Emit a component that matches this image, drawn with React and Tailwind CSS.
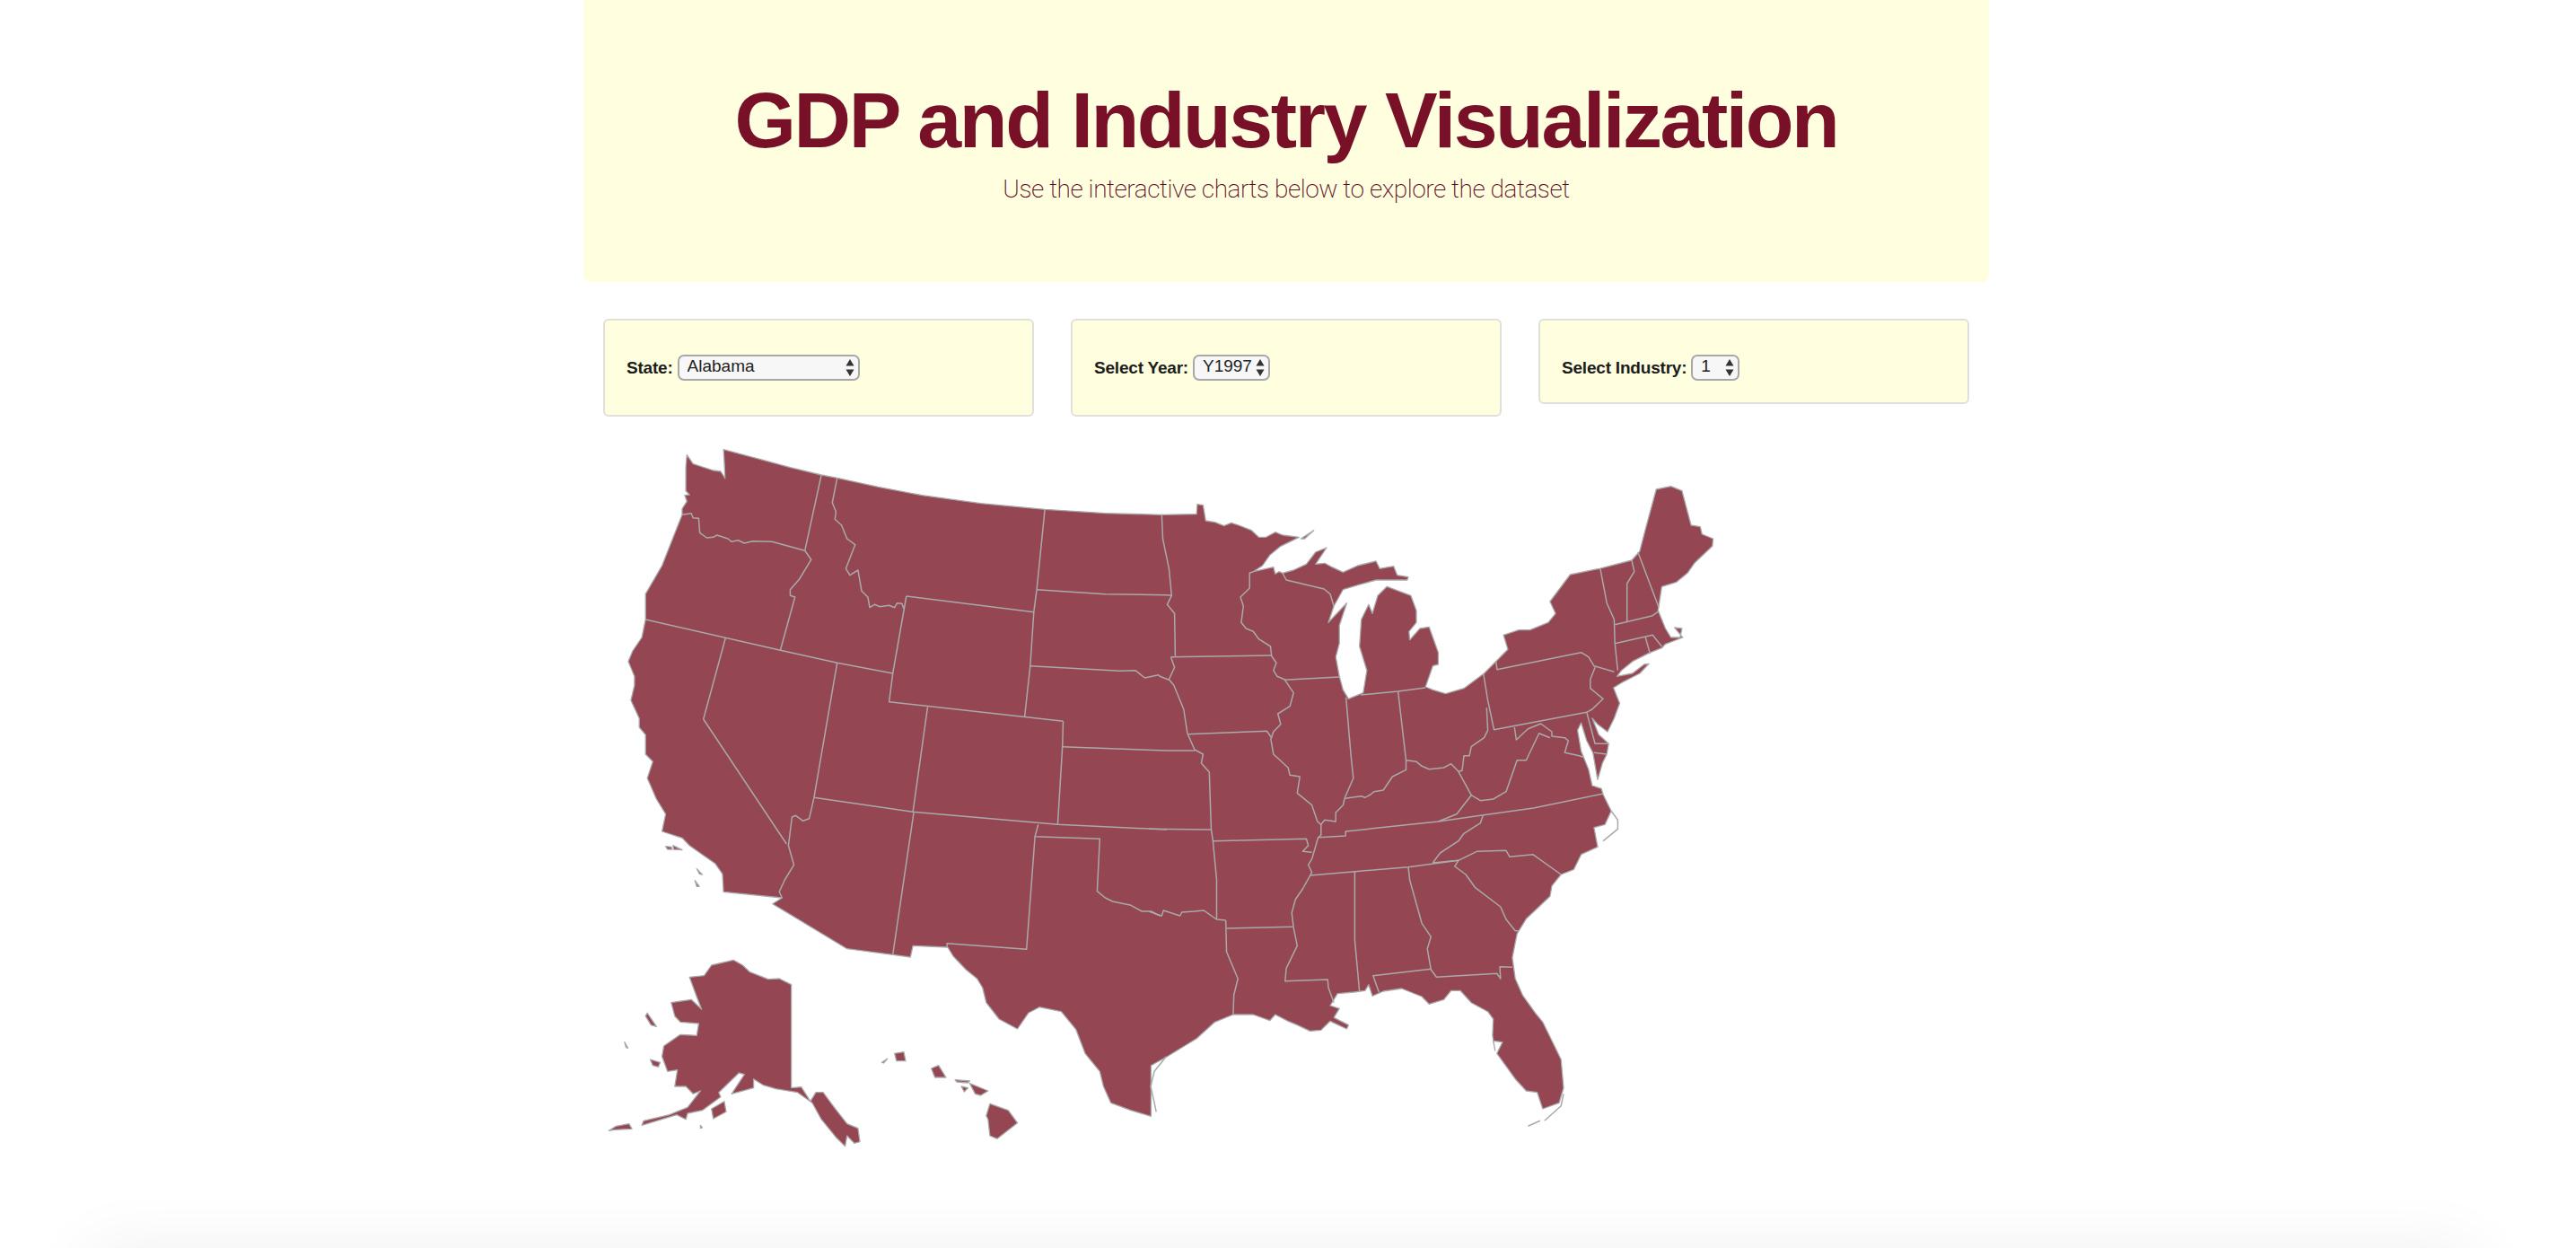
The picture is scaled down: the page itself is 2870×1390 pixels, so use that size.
import React from "react";

// map points were read off crops of the screenshot, each crop has its own origin
const A = [660, 480];
const B = [1280, 520];
const C = [660, 900];
const D = [1280, 900];

const seg = (frame, text) =>
  text.trim().split(/\s+/).map((p) => {
    const [x, y] = p.split(",").map(Number);
    return `${(frame[0] + x / 2.45).toFixed(1)},${(frame[1] + y / 3).toFixed(1)}`;
  });

const toPath = (parts, close) => {
  const pts = parts.flatMap(([frame, text]) => seg(frame, text));
  return `M${pts.join("L")}${close ? "Z" : ""}`;
};

const mainland = [
  [A, "358,62 450,92 540,122 625,147 668,157 780,187 900,215 1060,242 1235,262 1400,275 1552,280"],
  [B, `130,158 132,125 148,128 155,180 180,185 205,197 225,187 245,195 280,212 300,235 320,235 345,218 365,228 410,235
    360,265 330,295 310,330 285,350 340,335 345,358 355,350 365,355 395,345 430,325 455,285 485,270 455,325 480,322 500,335
    530,352 570,330 620,315 630,340 668,332 678,362 708,368 705,378 660,378 620,378 570,395 530,410 505,465 490,520 540,455
    520,530 520,590 510,635 520,700 530,745 545,775 585,755 595,680 575,600 580,510 600,460 610,490 625,430 650,400 715,430
    730,480 730,520 710,550 712,578 740,540 765,535 790,620 790,660 775,665 755,735 775,745 810,758 860,740 915,690 980,610
    968,562 1010,545 1040,545 1090,520 1110,490 1095,450 1150,360 1230,340 1318,312 1340,282 1355,210 1385,75 1425,65 1455,80
    1480,195 1505,200 1510,225 1540,240 1538,265 1490,320 1470,355 1440,385 1400,400 1390,480 1410,540 1425,570 1450,570
    1455,540 1435,537 1457,570 1410,592 1400,605 1365,622 1320,650 1290,680 1278,700 1320,690 1352,660 1365,658 1340,690
    1295,718 1268,738 1285,790 1270,840 1252,885 1225,860 1210,840 1228,895 1255,925 1250,960 1238,990 1225,1045 1212,955
    1195,915 1180,855 1170,880 1180,950 1200,1010 1210,1065 1235,1075 1240,1095 1262,1150 1245,1195 1215,1205 1225,1270
    1180,1295 1160,1345`],
  [D, `1125,222 1100,260 1095,295 1060,335 1030,370 1005,420 992,500 1000,570 1020,625 1055,685 1075,715 1125,840 1132,935
    1120,985 1075,1005 1060,950 1030,945 1000,905 950,820 965,782 940,778 945,810 938,760 940,705 925,680 880,650 850,610 825,610
    805,640 765,655 745,630 690,603 640,612 610,628 600,590 590,610 560,615 515,620 495,660 520,670 505,700 545,725 540,738
    495,712 470,742 440,745 405,725 380,712 345,690 330,710 285,690 230,690 180,715 130,770 50,830`],
  [C, `1525,860 1525,1030 1470,1010 1415,985 1395,930 1385,880 1345,820 1320,740 1280,680 1220,665 1190,685 1160,738 1110,705
    1075,650 1065,600 1050,570 1020,540 985,495 970,465 875,460 868,498 820,490 695,470 492,320 518,300 358,280 355,220 335,185
    300,155 265,125 245,100 190,78`],
  [A, `200,1280 175,1230 150,1160 165,1105 145,1080 145,1015 128,990 128,960 105,900 115,850 115,820 98,770 110,735 135,690
    145,630 145,545 190,450 245,280 245,260 258,235 252,215 265,213 255,200 255,120 258,80 275,110 330,132 350,135 362,158 360,100`],
];

const islands = [
  [[B, "415,240 450,212 425,240"]],
  [[C, "200,128 215,130 218,138 205,138"]],
  [[C, "220,125 245,140 222,138"]],
  [[C, "285,203 300,222 292,220"]],
  [[C, "280,242 292,262 285,262"]],
  // alaska
  [[C, `265,565 305,560 325,525 385,508 410,525 430,548 480,572 510,570 543,590 543,935 570,932 595,980 610,950 630,950 660,1000
    695,1055 725,1070 730,1115 715,1120 695,1095 690,1130 665,1100 625,1040 600,985 560,950 500,938 465,925 440,905 440,935 380,955
    415,890 400,885 345,950 350,965 300,1010 260,1020 255,1040 230,1025 135,1060 140,1045 210,1025 260,1000 295,945 275,955
    255,930 225,930 232,875 205,880 190,830 195,795 240,757 285,760 290,720 240,715 225,695 215,650 270,640 298,672 283,625`]],
  [[C, "325,1005 360,980 365,1015 330,1038"]],
  [[C, "45,1078 65,1063 100,1055 108,1072 60,1075"]],
  [[C, "145,695 150,685 175,730 160,725"]],
  [[C, "158,840 185,850 180,865 165,860"]],
  [[C, "88,782 97,802 92,800"]],
  [[C, "295,1060 300,1068 295,1070"]],
  // hawaii
  [[C, "825,820 850,815 855,845 830,845"]],
  [[C, "790,850 805,838 795,852"]],
  [[C, "925,870 945,860 965,900 935,900"]],
  [[C, "990,908 1030,912 1025,918 995,915"]],
  [[C, "1007,930 1025,935 1015,948"]],
  [[C, "1030,920 1080,945 1060,960 1045,955"]],
  [[C, "1085,988 1135,1010 1160,1052 1105,1105 1085,1095 1080,1040 1075,1028"]],
];

const borders = [
  [[A, "625,147 580,400"]],
  [[A, `668,157 655,240 665,270 662,295 680,315 695,360 717,380 692,460 703,482 725,465 735,535 752,555 757,590 770,580 785,587
    810,583 825,590 832,575 845,577 850,595`]],
  [[A, "245,280 270,275 275,290 290,292 293,340 312,357 330,355 340,348 370,360 380,370 398,365 415,375 437,368 490,370 580,400"]],
  [[A, "580,400 597,430 565,495 540,530 540,550 553,555 513,733"]],
  [[A, "145,630 513,733 668,775 820,810"]],
  [[A, "363,693 303,963"], [C, "530,120"]],
  [[A, "668,775 605,1225"]],
  [[A, "605,1225 875,1273 1270,1315 1568,1332"]],
  [[A, "605,1225 592,1295 575,1303 555,1285 545,1290"], [C, "535,125 550,190 525,240 510,280 518,300"]],
  [[A, "857,552 1205,605"]],
  [[A, "857,552 820,810 810,905 1285,970"]],
  [[A, "915,922 875,1273"]],
  [[A, "1235,262 1213,530 1205,605 1195,785 1180,955"]],
  [[A, "1213,530 1400,545 1568,548"], [B, "62,430"]],
  [[A, "1195,785 1440,802 1482,800 1508,825 1545,815"], [B, "30,700 55,712"]],
  [[A, "1285,970 1283,1055 1270,1315"]],
  [[A, "1283,1055 1568,1068"], [B, "125,948"]],
  [[C, "877,15 820,490"]],
  [[C, "1217,55 1208,95 1385,103 1378,278 1400,300 1420,312 1470,325 1500,345 1525,345 1550,360"], [D, "0,345 35,360 40,342 85,360 90,348 125,345 150,342 185,372 210,375"]],
  [[C, "1208,95 1185,472 968,452 968,465"]],
  [[B, "35,158 38,240 55,340 62,430 50,460 70,490 72,632"]],
  [[B, "60,635 335,630"]],
  [[B, "60,635 70,670 55,710 68,730 95,810 105,890 125,945 148,960 143,990 165,1020 170,1210 175,1250 185,1380"], [D, "185,372"]],
  [[B, "105,893 322,883 335,905"]],
  [[B, "0,1210 170,1212"]],
  [[B, "175,1250 430,1243 435,1265 420,1285 445,1288"]],
  [[B, `285,350 275,355 275,405 250,435 258,465 252,520 265,540 285,550 300,575 332,600 335,632 348,655 340,680 350,700 370,710
    395,755 385,800 352,825 360,860 340,885 333,910 340,960 380,1005 385,1030 412,1035 405,1090 445,1130 460,1185 470,1195 480,1180
    510,1185 510,1155 530,1130 535,1105`]],
  [[B, "470,1195 470,1230 462,1238 445,1310 435,1330 445,1355"], [D, "420,270 400,305 390,350 395,400 405,460 375,535 372,578 488,573 490,600 505,650"]],
  [[D, "212,402 392,397"]],
  [[D, "210,375 212,480 243,570 232,625 230,690"]],
  [[B, "462,1238 537,1233 537,1218 790,1185 905,1165 1050,1140 1240,1092"]],
  [[B, "790,1185 840,1160 880,1097"]],
  [[D, "912,25 905,50 860,85 845,110 795,150 775,183"]],
  [[D, "440,225 562,212 708,197 845,175 895,145 975,142 985,163 1048,155 1125,222"]],
  [[D, "775,183 845,175 835,195 865,222 890,265 960,330 975,372 1000,410 1010,410"]],
  [[D, "562,212 562,440 575,615"]],
  [[D, "708,197 712,240 745,385 770,430 760,470 770,540 785,565 950,553 960,570 958,530 992,532"]],
  [[D, "628,615 612,560 770,538"]],
  [[B, "365,355 375,378 478,408 495,425 505,465"]],
  [[B, "370,712 520,702"]],
  [[B, "538,770 552,970 558,1040 535,1105"]],
  [[B, "578,762 680,750 755,738"]],
  [[B, "680,750 702,980"]],
  [[B, `535,1108 580,1100 590,1105 605,1095 615,1085 640,1080 665,1035 702,1012 702,980 730,985 745,1000 765,1010 805,1005 825,992
    845,1018 855,1015 860,965 875,965 880,935 915,905 925,880 922,805`]],
  [[B, "913,690 925,780 942,878 1195,820"]],
  [[B, "948,652 950,677 1180,620 1200,635 1215,665 1270,685"]],
  [[B, "1218,670 1205,710 1205,740 1240,775 1210,810 1195,820 1218,925 1255,925"]],
  [[B, "998,870 1003,912 1035,875 1070,858 1100,885 1100,900 1135,905 1145,915 1135,955 1175,965 1185,970"]],
  [[B, "845,1018 880,1097 905,1115 940,1110 975,1085 1005,980 1030,980 1065,890 1095,905"]],
  [[B, "1215,955 1250,960"]],
  [[B, "1232,340 1250,455 1270,510 1272,590 1280,680"]],
  [[B, "1318,312 1325,350 1305,390 1305,520"]],
  [[B, "1335,285 1392,470"]],
  [[B, "1272,527 1375,497 1392,482"]],
  [[B, "1272,590 1375,562 1400,600"]],
  [[B, "1355,568 1368,625"]],
  // barrier islands, only a line in the picture
  [[B, "1262,1150 1280,1180 1280,1210 1240,1250"]],
  [[D, "47,830 15,880 5,930 15,985 20,1015"]],
  [[D, "1132,955 1125,995 1080,1045"]],
  [[D, "1068,1045 1035,1063"]],
];

const Arrows = () => (
  <svg className="pointer-events-none absolute right-[5px] top-[4px]" width="12" height="21" viewBox="0 0 12 21">
    <path d="M6 1 L10.5 8.5 L1.5 8.5 Z" fill="#333" />
    <path d="M6 20 L10.5 12.5 L1.5 12.5 Z" fill="#333" />
  </svg>
);

function Picker({ label, value, width, low }) {
  return (
    <div className={`rounded-md border-2 border-[#e0e0da] bg-[#ffffe0] pl-[24px] pt-[38px] ${low ? "pb-[24px]" : "pb-[38px]"}`}>
      <label className="flex items-center gap-[5px] text-[19px] font-bold leading-[29px] tracking-[-0.2px] text-[#1c1c1c]">
        {label}
        <span className="relative block" style={{ width }}>
          <select
            defaultValue={value}
            className="block h-[29px] w-full appearance-none rounded-[7px] border-2 border-[#a8a8a8] bg-[#f7f7f7] pb-[3px] pl-[9px] text-[19px] font-normal leading-[22px] tracking-normal text-[#222]"
          >
            <option>{value}</option>
          </select>
          <Arrows />
        </span>
      </label>
    </div>
  );
}

export default function App() {
  return (
    <div className="h-[1390px] overflow-hidden bg-white pr-[4px] [font-family:'Liberation_Sans',sans-serif]">
      <div className="mx-auto w-[1566px]">
        <div className="flex h-[314px] flex-col items-center rounded-b-lg bg-[#ffffe0] pt-[84px]">
          <h1 className="text-[88px] font-bold leading-[100px] tracking-[-2.45px] text-[#781127]">GDP and Industry Visualization</h1>
          <p className="mt-[7px] text-[28px] font-extralight leading-[40px] tracking-[-0.45px] text-[#5e0a1e] [font-family:Roboto,sans-serif]">
            Use the interactive charts below to explore the dataset
          </p>
        </div>

        <div className="mt-[41px] grid grid-cols-3 items-start gap-[41px] px-[22px]">
          <Picker label="State:" value="Alabama" width={203} />
          <Picker label="Select Year:" value="Y1997" width={86} />
          <Picker label="Select Industry:" value="1" width={54} low />
        </div>

        <svg className="ml-[10px] mt-[16px] block" width="1260" height="810" viewBox="660 480 1260 810">
          <g fill="#944753" stroke="#a9a9a9" strokeWidth="1.3" strokeLinejoin="round">
            <path d={toPath(mainland, true)} />
            {islands.map((parts, i) => (
              <path key={i} d={toPath(parts, true)} />
            ))}
          </g>
          <g fill="none" stroke="#a9a9a9" strokeWidth="1.5" strokeLinejoin="round">
            {borders.map((parts, i) => (
              <path key={i} d={toPath(parts, false)} />
            ))}
          </g>
        </svg>
      </div>

      {/* footer sits under the fold, only its shadow shows */}
      <div className="ml-[100px] mr-[110px] mt-[105px] h-[80px] bg-white shadow-[0_0_80px_rgba(0,0,0,0.07)]" />
    </div>
  );
}
